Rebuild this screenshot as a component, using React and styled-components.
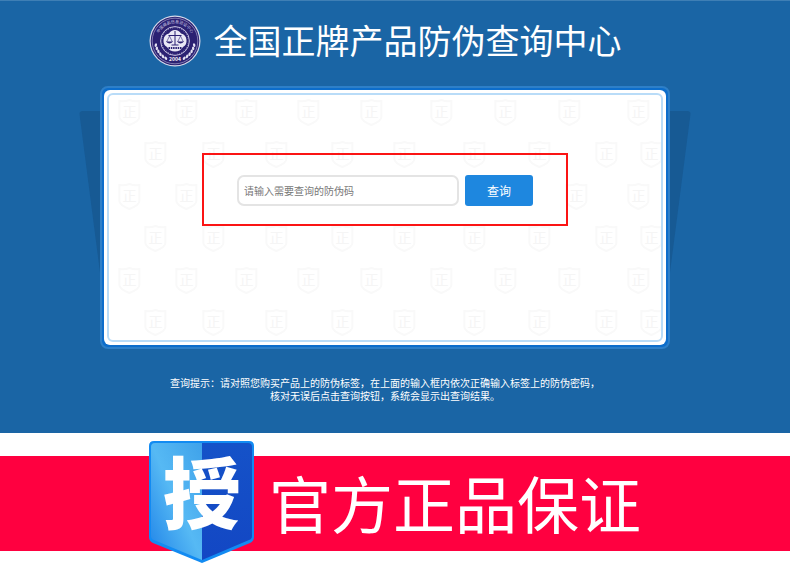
import React from 'react';
import { styled, createGlobalStyle } from 'styled-components';

const GlobalStyle = createGlobalStyle`
  * {
    box-sizing: border-box;
  }
  body {
    margin: 0;
    background: #fff;
    font-family: "Noto Sans CJK SC", "Noto Sans", sans-serif;
  }
`

const Hero = styled.section`
  display: flex;
  flex-direction: column;
  align-items: center;
  padding: 14px 20px 31px 0;
  background: #1a65a5;
  border-top: 1px solid #3f7fb5;
`

const Header = styled.header`
  display: flex;
  align-items: flex-start;
  gap: 13px;
  height: 52px;
`

const Seal = styled.svg`
  width: 52px;
  height: 52px;
  flex: none;
`

const Title = styled.h1`
  margin: 0;
  font-size: 34px;
  font-weight: 400;
  line-height: 50px;
  color: #fff;
`

const PanelWrap = styled.div`
  position: relative;
  width: 74%;
  margin-top: 19px;
  z-index: 0;
  &::before {
    content: '';
    position: absolute;
    z-index: -1;
    top: 25px;
    left: -21px;
    right: -21px;
    height: 170px;
    border-radius: 4px;
    background: #175a94;
    clip-path: polygon(0 0, 100% 0, calc(100% - 22px) 100%, 22px 100%);
  }
`

const Panel = styled.div`
  border: 2px solid #2d7fc8;
  border-radius: 8px;
  background: #0c6dcb;
  padding: 2px;
`

const Sheet = styled.div`
  padding: 3px;
  border-radius: 6px;
  background: #fff;
`

const Inner = styled.div`
  position: relative;
  z-index: 0;
  display: flex;
  justify-content: center;
  height: 249px;
  padding-top: 58px;
  border: 2px solid #b9dcf8;
  border-radius: 6px;
  overflow: hidden;
`

const Pattern = styled.svg`
  position: absolute;
  z-index: -1;
  top: 0;
  left: 0;
  width: 100%;
  height: 100%;
`

const SearchForm = styled.form`
  display: flex;
  align-items: center;
  justify-content: center;
  gap: 6px;
  width: 366px;
  height: 73px;
  padding-top: 2px;
  border: 2px solid #fb1414;
`

const CodeInput = styled.input`
  width: 222px;
  height: 31px;
  padding: 0 5px;
  border: 2px solid #e4e4e4;
  border-radius: 7px;
  background: #fff;
  font-family: inherit;
  font-size: 10px;
  color: #333;
  outline: none;
  &::placeholder {
    color: #777;
    opacity: 1;
  }
`

const QueryButton = styled.button`
  width: 68px;
  height: 31px;
  padding: 0;
  border: none;
  border-radius: 3px;
  background: #1e87df;
  font-family: inherit;
  font-size: 12px;
  color: #fff;
  cursor: pointer;
`

const Tips = styled.p`
  margin: 27px 0 0;
  font-size: 10px;
  line-height: 13px;
  text-align: center;
  color: #fff;
`

const Banner = styled.section`
  display: flex;
  align-items: center;
  justify-content: center;
  gap: 15px;
  height: 95px;
  margin: 23px 0 18px;
  padding-bottom: 3px;
  background: #ff0040;
`

const Badge = styled.svg`
  width: 105px;
  height: 124px;
  flex: none;
  overflow: visible;
`

const Slogan = styled.h2`
  margin: 0;
  font-size: 62px;
  font-weight: 400;
  line-height: 90px;
  white-space: nowrap;
  color: #fff;
`

const oddRow = [23, 80, 140, 202, 265, 335, 399, 463, 532]
const evenRow = [49, 107, 170, 236, 298, 368, 433, 500, 545]

// the third row keeps clear of the search form
const rows = [
  { y: 17, xs: oddRow },
  { y: 59, xs: evenRow },
  { y: 101, xs: [23, 80, 470, 532] },
  { y: 143, xs: evenRow },
  { y: 185, xs: oddRow },
  { y: 227, xs: evenRow },
]

const beads = [...Array(36).keys()]
const leaves = [28, 38, 48, 58, 68, 78]

function SealLogo() {
  return (
    <Seal viewBox="0 0 52 52" aria-hidden="true">
      <defs>
        <path id="sealArc" d="M8.4 30 A18 18 0 1 1 43.6 30" />
      </defs>
      <circle cx="26" cy="26" r="25.5" fill="#d5d9ea" />
      <circle cx="26" cy="26" r="24.3" fill="#2b2172" />
      <circle cx="26" cy="26" r="22.8" fill="none" stroke="#b9b5da" strokeWidth="0.6" />
      <text fontSize="4" fill="#cfcbe8">
        <textPath href="#sealArc" startOffset="50%" textAnchor="middle">中国商品信息验证中心</textPath>
      </text>
      {leaves.map(a => (
        <g key={a} fill="#e3e1f2">
          <ellipse cx="26" cy="45.6" rx="1.9" ry="1.2" transform={`rotate(${a} 26 26) rotate(25 26 45.6)`} />
          <ellipse cx="26" cy="45.6" rx="1.9" ry="1.2" transform={`rotate(${-a} 26 26) rotate(-25 26 45.6)`} />
        </g>
      ))}
      <text x="26" y="45.5" fontSize="5" fontWeight="700" textAnchor="middle" fill="#fff">2004</text>
      <circle cx="26" cy="26" r="14.4" fill="none" stroke="#d8d5ec" strokeWidth="0.9" />
      {beads.map(i => (
        <circle key={i} cx="26" cy="12.8" r="0.4" fill="#a9a3d0" transform={`rotate(${i * 10} 26 26)`} />
      ))}
      <path d="M20 18.5Q22 15 26 15Q30 15 32 18.5Q37 19.5 37.5 25Q38 30 34 32Q31 36.5 26 36.5Q21 36.5 18 32Q14 30 14.5 25Q15 19.5 20 18.5Z" fill="#e9e8f5" />
      <g fill="none" stroke="#2b2172" strokeWidth="1">
        <path d="M26 16V30M19.5 20.5H32.5M22.5 30H29.5" />
        <path d="M20.5 21L17.6 27M20.5 21L23.4 27M31.5 21L28.6 27M31.5 21L34.4 27" strokeWidth="0.6" />
      </g>
      <path d="M17 26.5h7q-3.5 4-7 0ZM28 26.5h7q-3.5 4-7 0Z" fill="#2b2172" />
      <path d="M19.5 33H32.5" stroke="#2b2172" strokeWidth="1.8" strokeDasharray="1.5 0.8" />
    </Seal>
  )
}

function Watermark() {
  return (
    <Pattern viewBox="0 0 557 245" preserveAspectRatio="xMidYMin slice" aria-hidden="true">
      {rows.map(row => row.xs.map(x => (
        <g key={`${x}-${row.y}`} transform={`translate(${x} ${row.y})`}>
          <path
            d="M-10 -11Q-5 -10 0 -12Q5 -10 10 -11V5Q10 9 0 13Q-10 9 -10 5Z"
            fill="none"
            stroke="#f9f9f9"
            strokeWidth="2"
          />
          <text y="5" fontSize="14" textAnchor="middle" fill="#f5f5f5">正</text>
        </g>
      )))}
    </Pattern>
  )
}

function ShieldBadge() {
  return (
    <Badge viewBox="0 0 105 124" role="img" aria-label="授">
      <defs>
        <linearGradient id="badgeLeft" x1="1" y1="0" x2="0" y2="1">
          <stop offset="0" stopColor="#3fa2ea" />
          <stop offset="0.5" stopColor="#56b9f4" />
          <stop offset="1" stopColor="#1f83e8" />
        </linearGradient>
        <linearGradient id="badgeRight" x1="0" y1="0" x2="0" y2="1">
          <stop offset="0" stopColor="#1552c8" />
          <stop offset="1" stopColor="#1347c4" />
        </linearGradient>
      </defs>
      <path d="M5 1H100Q105 1 105 6V97Q105 101 101 103L53 123L4 103Q0 101 0 97V6Q0 1 5 1Z" fill="#128bf2" />
      <path d="M6 3H53V120L5 100Q2 99 2 96V7Q2 3 6 3Z" fill="url(#badgeLeft)" />
      <path d="M53 3H99Q103 3 103 7V96Q103 99 100 100L53 120Z" fill="url(#badgeRight)" />
      <text x="53" y="83" fontSize="78" fontWeight="900" textAnchor="middle" fill="#fff">授</text>
    </Badge>
  )
}

function App() {

  return (
    <main>
      <GlobalStyle />
      <Hero>
        <Header>
          <SealLogo />
          <Title>全国正牌产品防伪查询中心</Title>
        </Header>
        <PanelWrap>
          <Panel>
            <Sheet>
              <Inner>
                <Watermark />
                <SearchForm onSubmit={e => e.preventDefault()}>
                  <CodeInput type="text" aria-label="防伪码" placeholder="请输入需要查询的防伪码" />
                  <QueryButton type="submit">查询</QueryButton>
                </SearchForm>
              </Inner>
            </Sheet>
          </Panel>
        </PanelWrap>
        <Tips>
          查询提示：请对照您购买产品上的防伪标签，在上面的输入框内依次正确输入标签上的防伪密码，
          <br />
          核对无误后点击查询按钮，系统会显示出查询结果。
        </Tips>
      </Hero>
      <Banner>
        <ShieldBadge />
        <Slogan>官方正品保证</Slogan>
      </Banner>
    </main>
  );
}

export default App;
